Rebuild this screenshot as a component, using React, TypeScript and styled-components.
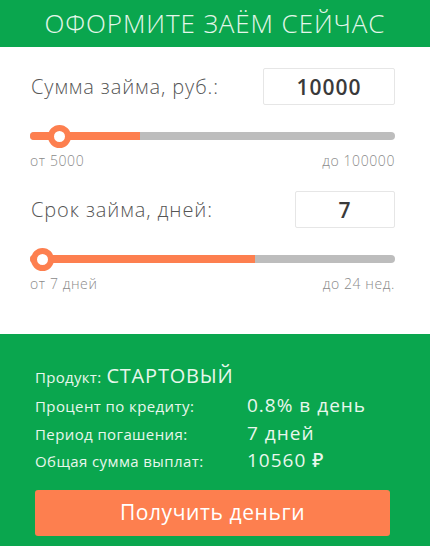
import styled, { createGlobalStyle } from "styled-components";

const GlobalStyle = createGlobalStyle`
  html, body { margin: 0; padding: 0; background: #fff; }
  body { font-family: "Open Sans", "Noto Sans", sans-serif; }
  * { box-sizing: border-box; }
`;

const Page = styled.div`
  width: 430px;
  height: 546px;
  overflow: hidden;
  display: flex;
  flex-direction: column;
`;

const Header = styled.div`
  height: 47px;
  background: #0aa64e;
  color: #e4f6ea;
  display: flex;
  align-items: center;
  justify-content: center;
  font-size: 26px;
  font-weight: 300;
  letter-spacing: 0.9px;
  padding-bottom: 2px;
`;

const Calc = styled.div`
  padding: 21px 35px 0 30px;
  height: 287px;
`;

const FieldRow = styled.div`
  display: flex;
  align-items: center;
  justify-content: space-between;
  height: 37px;
`;

const Label = styled.div`
  font-size: 20px;
  color: #555;
  font-weight: 300;
  letter-spacing: 0.9px;
  padding-left: 1px;
`;

const ValueBox = styled.div<{ $w: number }>`
  width: ${({ $w }) => $w}px;
  height: 37px;
  border: 1px solid #e6e6e6;
  border-radius: 2px;
  display: flex;
  align-items: center;
  justify-content: center;
  font-size: 21px;
  font-weight: 600;
  letter-spacing: 1px;
  color: #3a3a3a;
`;

const Track = styled.div`
  position: relative;
  height: 8px;
  border-radius: 4px;
  background: #bdbdbd;
  margin-top: 27px;
`;

const Fill = styled.div`
  height: 100%;
  border-radius: 4px 0 0 4px;
  background: #fd7f4f;
`;

const Thumb = styled.div`
  position: absolute;
  top: 50%;
  width: 23px;
  height: 23px;
  margin: -11.5px 0 0 -11.5px;
  border-radius: 50%;
  background: #fff;
  border: 6.5px solid #fd7f4f;
`;

const Range = styled.div<{ $gap: number }>`
  display: flex;
  justify-content: space-between;
  font-size: 14px;
  font-weight: 300;
  letter-spacing: 0.6px;
  color: #8a8a8a;
  margin-top: 11px;
  margin-bottom: ${({ $gap }) => $gap}px;
`;

const Summary = styled.div`
  flex: 1;
  background: #0aa64e;
  padding: 28px 40px 0 35px;
  color: #e8f7ec;
`;

const Product = styled.div`
  font-size: 15px;
  letter-spacing: 0.3px;
  display: flex;
  align-items: baseline;
  gap: 5px;
  height: 30px;
  span {
    font-size: 20px;
    letter-spacing: 0.8px;
  }
`;

const InfoRow = styled.div`
  display: grid;
  grid-template-columns: 212px 1fr;
  align-items: baseline;
  height: 27.5px;
`;

const InfoKey = styled.div`
  font-size: 15px;
  letter-spacing: 0.4px;
`;

const InfoVal = styled.div`
  font-size: 19px;
  font-weight: 500;
  letter-spacing: 1px;
`;

const Button = styled.button`
  margin-top: 15px;
  width: 355px;
  height: 46px;
  border: none;
  border-radius: 3px;
  background: #fd7f4f;
  color: #fff;
  font-family: inherit;
  font-size: 21px;
  font-weight: 400;
  letter-spacing: 0.6px;
  display: flex;
  align-items: center;
  justify-content: center;
  padding-bottom: 2px;
`;

const Slider = ({ fill, thumb }: { fill: number; thumb: number }) => (
  <Track>
    <Fill style={{ width: `${fill}%` }} />
    <Thumb style={{ left: `${thumb}%` }} />
  </Track>
);

export default function App() {
  return (
    <Page>
      <GlobalStyle />
      <Header>ОФОРМИТЕ ЗАЁМ СЕЙЧАС</Header>
      <Calc>
        <FieldRow>
          <Label>Сумма займа, руб.:</Label>
          <ValueBox $w={132}>10000</ValueBox>
        </FieldRow>
        <Slider fill={30} thumb={8.2} />
        <Range $gap={21}>
          <span>от 5000</span>
          <span>до 100000</span>
        </Range>
        <FieldRow>
          <Label>Срок займа, дней:</Label>
          <ValueBox $w={100}>7</ValueBox>
        </FieldRow>
        <Slider fill={61.6} thumb={3.3} />
        <Range $gap={0}>
          <span>от 7 дней</span>
          <span>до 24 нед.</span>
        </Range>
      </Calc>
      <Summary>
        <Product>
          Продукт:<span>СТАРТОВЫЙ</span>
        </Product>
        <InfoRow>
          <InfoKey>Процент по кредиту:</InfoKey>
          <InfoVal>0.8% в день</InfoVal>
        </InfoRow>
        <InfoRow>
          <InfoKey>Период погашения:</InfoKey>
          <InfoVal>7 дней</InfoVal>
        </InfoRow>
        <InfoRow>
          <InfoKey>Общая сумма выплат:</InfoKey>
          <InfoVal>10560 ₽</InfoVal>
        </InfoRow>
        <Button>Получить деньги</Button>
      </Summary>
    </Page>
  );
}
